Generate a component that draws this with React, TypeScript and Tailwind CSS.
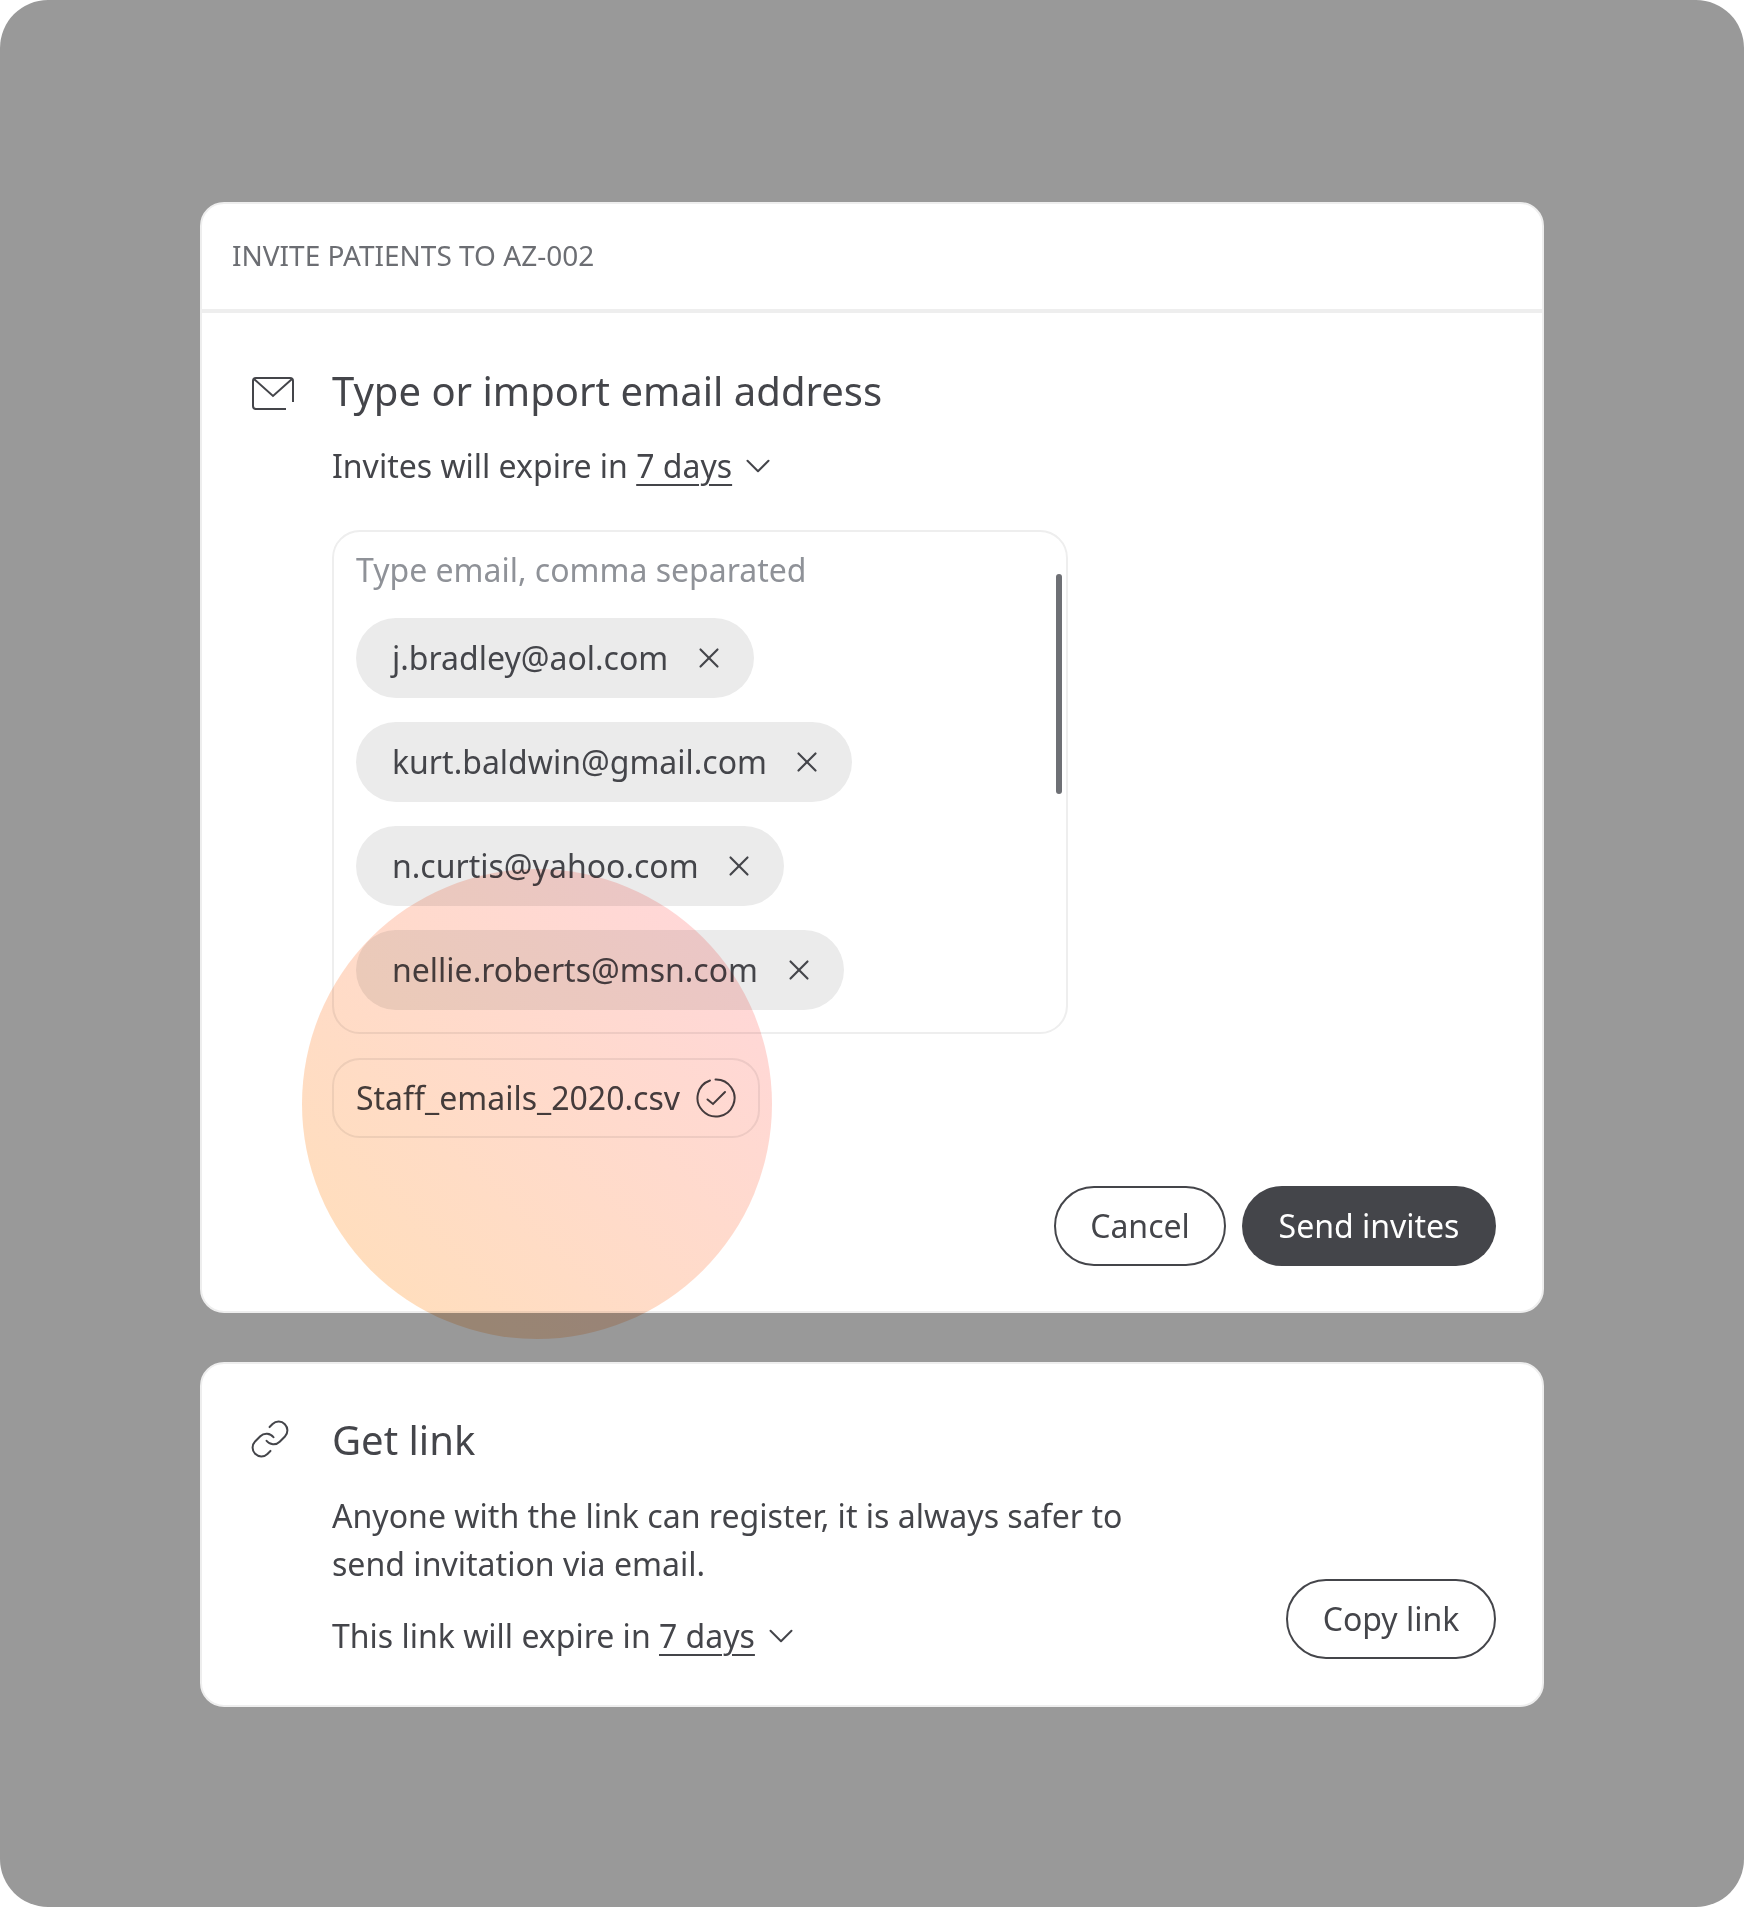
import { ChevronDown, Link, X } from "lucide-react";

const emails = [
  { address: "j.bradley@aol.com", width: "w-[398px]" },
  { address: "kurt.baldwin@gmail.com", width: "w-[496px]" },
  { address: "n.curtis@yahoo.com", width: "w-[428px]" },
  { address: "nellie.roberts@msn.com", width: "w-[488px]" },
];

function MailIcon() {
  return (
    <svg width="44" height="40" viewBox="0 0 44 40" fill="none" stroke="#44454a" strokeWidth="2" className="shrink-0">
      <path d="M43 31V10a3 3 0 0 0-3-3H6a3 3 0 0 0-3 3v25a3 3 0 0 0 3 3h30" />
      <path d="M4 8l19 17L42 8" />
    </svg>
  );
}

function CheckIcon() {
  return (
    <svg width="40" height="40" viewBox="0 0 40 40" fill="none" stroke="#44454a" strokeWidth="2" strokeLinecap="round" className="shrink-0">
      <path d="M19.500 1.500A18.500 18.500 0 1 1 14 2.500" />
      <path d="M11.500 21.500l5.500 4.500L29 14" />
    </svg>
  );
}

function Expiry({ label }: { label: string }) {
  return (
    <div className="flex items-center text-[32px] leading-[44px] text-[#44454a]">
      <span>{label}&nbsp;</span>
      <span className="underline underline-offset-[6px] decoration-2">7 days</span>
      <ChevronDown className="ml-[5px] size-[42px]" strokeWidth={1.15} />
    </div>
  );
}

export default function App() {
  return (
    <div className="h-[1907px] w-[1744px] bg-white font-['Noto_Sans',sans-serif] text-[#44454a]">
      <div className="h-full rounded-[48px] bg-[#999999] pl-[200px] pt-[202px]">
        <div className="relative h-[1111px] w-[1344px] rounded-3xl border-2 border-[#eeeeee] bg-white">
          <div className="flex h-[109px] items-center border-b-4 border-[#eeeeee] pl-[30px] pb-1 text-[28px] text-[#6c6e73]">
            INVITE PATIENTS TO AZ-002
          </div>

          <div className="pl-[48px] pt-[48px]">
            <div className="flex items-center gap-[38px]">
              <MailIcon />
              <h2 className="text-[40px] leading-[60px]">Type or import email address</h2>
            </div>
            <div className="pl-[82px]">
              <div className="mt-[23px]">
                <Expiry label="Invites will expire in" />
              </div>

              <div className="relative mt-[42px] h-[504px] w-[736px] rounded-[28px] border-2 border-[#eeeeee] px-[22px] pt-4">
                <div className="text-[32px] leading-[44px] text-[#8f9298]">Type email, comma separated</div>
                <div className="mt-[26px] flex flex-col gap-6">
                  {emails.map((email) => (
                    <div
                      key={email.address}
                      className={`flex h-20 items-center justify-between rounded-full bg-[#ebebeb] pl-9 pr-[28px] text-[32px] ${email.width}`}
                    >
                      <span>{email.address}</span>
                      <X className="size-[34px]" strokeWidth={1.5} />
                    </div>
                  ))}
                </div>
                <div className="absolute right-[4px] top-[42px] h-[220px] w-[6px] rounded-full bg-[#6e7075]" />
              </div>

              <div className="mt-[24px] flex h-20 w-[428px] items-center justify-between rounded-[28px] border-2 border-[#eeeeee] pl-[22px] pr-[22px] text-[32px]">
                <span>Staff_emails_2020.csv</span>
                <CheckIcon />
              </div>

              <div className="mt-[48px] flex justify-end gap-4 pr-[46px]">
                <button className="h-20 w-[172px] rounded-full border-2 border-[#44454a] text-[32px]">Cancel</button>
                <button className="h-20 w-[254px] rounded-full bg-[#44454a] text-[32px] text-white">Send invites</button>
              </div>
            </div>
          </div>

          <div className="pointer-events-none absolute left-[100px] top-[665px] size-[470px] rounded-full bg-gradient-to-tr from-[#ffdfb8] to-[#ffd6dc] mix-blend-multiply" />
        </div>

        <div className="mt-[49px] h-[345px] w-[1344px] rounded-3xl border-2 border-[#eeeeee] bg-white pl-[48px] pt-[46px]">
          <div className="flex items-center gap-[41px]">
            <Link className="-ml-px mb-[3px] size-[42px]" strokeWidth={1.15} />
            <h2 className="text-[40px] leading-[60px]">Get link</h2>
          </div>
          <div className="flex items-end justify-between pl-[82px] pr-[46px]">
            <div>
              <p className="mt-[22px] w-[830px] text-[32.1px] leading-[48px]">
                Anyone with the link can register, it is always safer to send invitation via email.
              </p>
              <div className="mt-[26px]">
                <Expiry label="This link will expire in" />
              </div>
            </div>
            <button className="-mb-px h-20 w-[210px] rounded-full border-2 border-[#44454a] text-[32px]">Copy link</button>
          </div>
        </div>
      </div>
    </div>
  );
}
